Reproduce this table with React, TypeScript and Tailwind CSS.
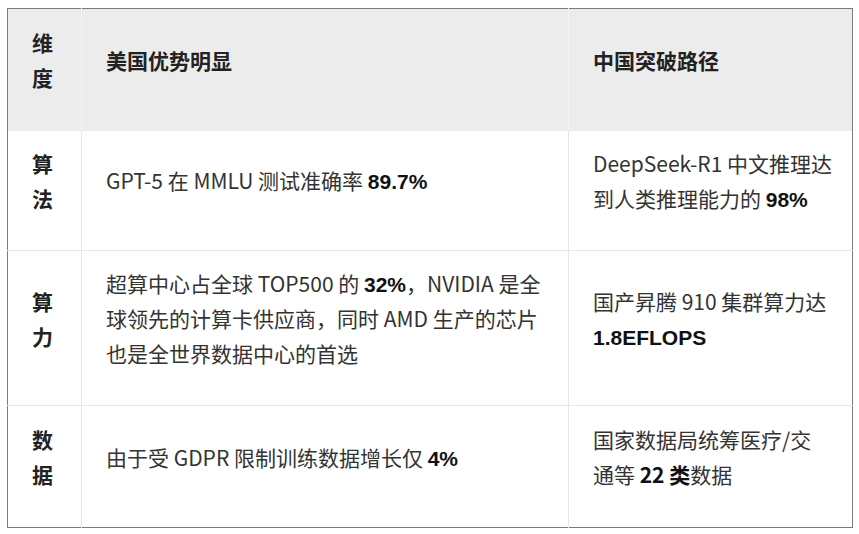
import React from 'react';

type Row = {
  dim: string;
  us: React.ReactNode;
  cn: React.ReactNode;
};

const cjk = "font-['Noto_Sans_CJK_SC','Noto_Sans',sans-serif]";
const num = "font-['Liberation_Sans','Noto_Sans_CJK_SC',sans-serif] font-bold text-[#111] leading-none";

const rows: Row[] = [
  {
    dim: '算法',
    us: (
      <>
        GPT-5 在 MMLU 测试准确率 <b className={num}>89.7%</b>
      </>
    ),
    cn: (
      <>
        DeepSeek-R1 中文推理达
        <br />
        到人类推理能力的 <b className={num}>98%</b>
      </>
    ),
  },
  {
    dim: '算力',
    us: (
      <>
        超算中心占全球 TOP500 的 <b className={num}>32%</b>，NVIDIA 是全
        <br />
        球领先的计算卡供应商，同时 AMD 生产的芯片
        <br />
        也是全世界数据中心的首选
      </>
    ),
    cn: (
      <>
        国产昇腾 910 集群算力达
        <br />
        <b className={num}>1.8EFLOPS</b>
      </>
    ),
  },
  {
    dim: '数据',
    us: (
      <>
        由于受 GDPR 限制训练数据增长仅 <b className={num}>4%</b>
      </>
    ),
    cn: (
      <>
        国家数据局统筹医疗/交
        <br />
        通等 <b className="font-bold text-[#111] leading-none">22 类</b>数据
      </>
    ),
  },
];

const cellBase = 'align-middle pt-[15px] pb-[34px] leading-[35px] whitespace-nowrap';

export default function App() {
  return (
    <div className={`bg-white pl-[7px] pr-[7px] pt-[8px] pb-[7px] ${cjk}`}>
      <table className="w-[845px] table-fixed border-collapse border border-[#7a7a7a] text-[21px] text-[#333]">
        <colgroup>
          <col className="w-[74px]" />
          <col className="w-[487px]" />
          <col className="w-[284px]" />
        </colgroup>
        <thead>
          <tr className="bg-[#ececec] h-[122px]">
            <th className={`${cellBase} px-6 text-left font-bold text-[#222] border-r border-[#f4f4f4]`}>
              维<br />度
            </th>
            <th className={`${cellBase} px-6 text-left font-bold text-[#222] border-r border-[#f4f4f4]`}>美国优势明显</th>
            <th className={`${cellBase} px-6 text-left font-bold text-[#222]`}>中国突破路径</th>
          </tr>
        </thead>
        <tbody>
          {rows.map((r, i) => (
            <tr key={r.dim} className={`${i === 1 ? 'h-[155px]' : i === 0 ? 'h-[120px]' : 'h-[122px]'} ${i > 0 ? 'border-t border-[#e6e6e6]' : ''}`}>
              <td className={`${cellBase} px-6 font-bold text-[#222] border-r border-[#e6e6e6]`}>
                {r.dim[0]}
                <br />
                {r.dim[1]}
              </td>
              <td className={`${cellBase} px-6 border-r border-[#e6e6e6]`}>{r.us}</td>
              <td className={`${cellBase} px-6`}>{r.cn}</td>
            </tr>
          ))}
        </tbody>
      </table>
    </div>
  );
}
